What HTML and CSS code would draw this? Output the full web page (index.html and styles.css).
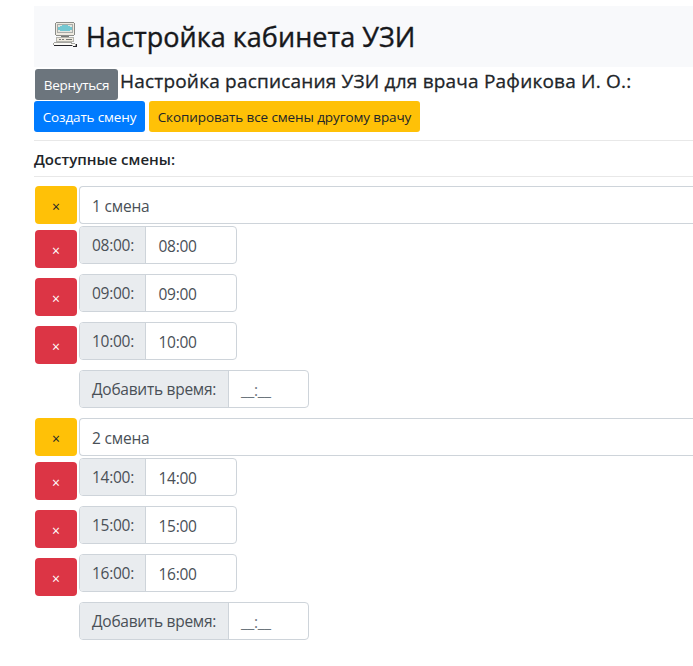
FILE: index.html
```html
<!DOCTYPE html>
<html lang="ru">
<head>
<meta charset="utf-8">
<title>Настройка кабинета УЗИ</title>
<link rel="stylesheet" href="styles.css">
</head>
<body>
<main class="page">
  <header class="header">
    <svg class="logo" width="24" height="26" viewBox="0 0 24 26" shape-rendering="crispEdges">
      <path fill="#8b8d89" d="M3 0h18v1h1v12h-1v1H3v-1H2V1h1z"/>
      <path fill="#eeeae0" d="M3 1h18v12H3z"/>
      <path fill="#a9aca8" d="M4 2h16v9H4z"/>
      <path fill="#e3e5df" d="M5 3h14v7H5z"/>
      <path fill="#74c8d2" d="M9 3h6v1h2v1h2v3h-2v1H7V8H5V5h2V4h2z"/>
      <path fill="#777a76" d="M8 14h8v1H8z"/>
      <path fill="#b5b5ae" d="M3 15h18v5H3z"/>
      <path fill="#eeeadf" d="M4 16h16v3H4z"/>
      <path fill="#777a76" d="M6 17h2v1H6zM9 17h2v1H9zM13 17h6v1h-6z"/>
      <path fill="#a5a5a0" d="M1 20h18v1h3v1h1v3h-3v-1H1v-1H0v-2h1z"/>
      <path fill="#fbfaf6" d="M1 21h17v1h4v2h-2v-1H1z"/>
      <path fill="#25252b" d="M1 23h18v1H1zM20 24h3v1h-3zM23 22h1v3h-1z"/>
    </svg>
    <h1 class="title">Настройка кабинета УЗИ</h1>
  </header>
  <div class="subhead">
    <button class="btn btn-secondary">Вернуться</button>
    <h2 class="subtitle">Настройка расписания УЗИ для врача Рафикова И. О.:</h2>
  </div>
  <div class="actions">
    <button class="btn btn-primary">Создать смену</button>
    <button class="btn btn-warning">Скопировать все смены другому врачу</button>
  </div>
  <h3 class="section">Доступные смены:</h3>

  <section class="shift">
    <div class="shift-head"><button class="del del-shift">×</button><div class="name">1 смена</div></div>
    <div class="slot"><button class="del">×</button><div class="group"><span class="label">08:00:</span><span class="value">08:00</span></div></div>
    <div class="slot"><button class="del">×</button><div class="group"><span class="label">09:00:</span><span class="value">09:00</span></div></div>
    <div class="slot"><button class="del">×</button><div class="group"><span class="label">10:00:</span><span class="value">10:00</span></div></div>
    <div class="group add"><span class="label">Добавить время:</span><span class="value empty">__:__</span></div>
  </section>

  <section class="shift">
    <div class="shift-head"><button class="del del-shift">×</button><div class="name">2 смена</div></div>
    <div class="slot"><button class="del">×</button><div class="group"><span class="label">14:00:</span><span class="value">14:00</span></div></div>
    <div class="slot"><button class="del">×</button><div class="group"><span class="label">15:00:</span><span class="value">15:00</span></div></div>
    <div class="slot"><button class="del">×</button><div class="group"><span class="label">16:00:</span><span class="value">16:00</span></div></div>
    <div class="group add"><span class="label">Добавить время:</span><span class="value empty">__:__</span></div>
  </section>
</main>
</body>
</html>
```
FILE: styles.css
```css
* { box-sizing: border-box; }
body {
  margin: 0;
  background: #fff;
  color: #212529;
  font-family: "Open Sans", "Noto Sans", sans-serif;
  overflow: hidden;
}
button { font-family: inherit; border: 0; margin: 0; }
h1, h2, h3 { margin: 0; white-space: nowrap; }
.page { padding: 6px 0 0 34px; }
.header {
  display: flex;
  height: 61px;
  padding: 16px 0 0 19px;
  background: #f8f9fb;
}
.logo { flex: none; }
.title {
  margin-left: 9px;
  color: #16181b;
  font-size: 27px;
  line-height: 30px;
  font-weight: 500;
  letter-spacing: 0.04px;
  -webkit-text-stroke: 0.4px currentColor;
}
.subhead { display: flex; height: 34px; padding: 2px 0 0 1px; }
.btn {
  height: 31px;
  padding: 1px 0 0;
  border-radius: 3px;
  font-size: 13.5px;
  line-height: 28px;
  text-align: center;
  white-space: nowrap;
  color: #fff;
}
.btn-secondary { width: 83px; background: #6c757d; letter-spacing: -0.3px; }
.btn-primary { width: 111px; background: #007bff; letter-spacing: -0.15px; }
.btn-warning { width: 271px; background: #ffc107; color: #212529; letter-spacing: -0.1px; }
.subtitle {
  margin-left: 2px;
  font-size: 19px;
  line-height: 24px;
  font-weight: 500;
  letter-spacing: 0.2px;
  -webkit-text-stroke: 0.3px currentColor;
}
.actions {
  display: flex;
  gap: 4px;
  height: 40px;
  border-bottom: 1px solid #e8e8e8;
}
.section {
  height: 36px;
  border-bottom: 1px solid #e8e8e8;
  font-size: 15px;
  line-height: 36px;
  font-weight: 600;
}
.shift { padding: 9px 0 0 1px; height: 232px; }
.shift-head { display: flex; gap: 2px; height: 40px; }
.del {
  flex: none;
  width: 42px;
  height: 38px;
  padding: 3px 0 0;
  border-radius: 4px;
  background: #dc3545;
  color: #fff;
  font-size: 14px;
  text-align: center;
}
.del-shift { background: #ffc107; color: #212529; }
.name {
  flex: 1;
  height: 38px;
  padding: 1px 0 0 12px;
  border: 1px solid #ced4da;
  border-right: 0;
  border-radius: 4px 0 0 4px;
  color: #495057;
  font-size: 15.5px;
  line-height: 36px;
  letter-spacing: -0.2px;
}
.slot { display: flex; gap: 2px; height: 48px; }
.slot .del { margin-top: 4px; }
.group {
  display: flex;
  width: 158px;
  height: 38px;
  border: 1px solid #ced4da;
  border-radius: 4px;
  overflow: hidden;
  color: #495057;
  font-size: 15.5px;
  line-height: 36px;
  letter-spacing: -0.27px;
  white-space: nowrap;
}
.label {
  width: 66px;
  padding-left: 12px;
  background: #e9ecef;
  border-right: 1px solid #ced4da;
}
.value { padding: 1px 0 0 12.5px; }
.add { width: 230px; margin-left: 44px; }
.add .label { width: 149px; }
.add .value { padding-left: 12px; }
.empty { color: #6c757d; }
```
